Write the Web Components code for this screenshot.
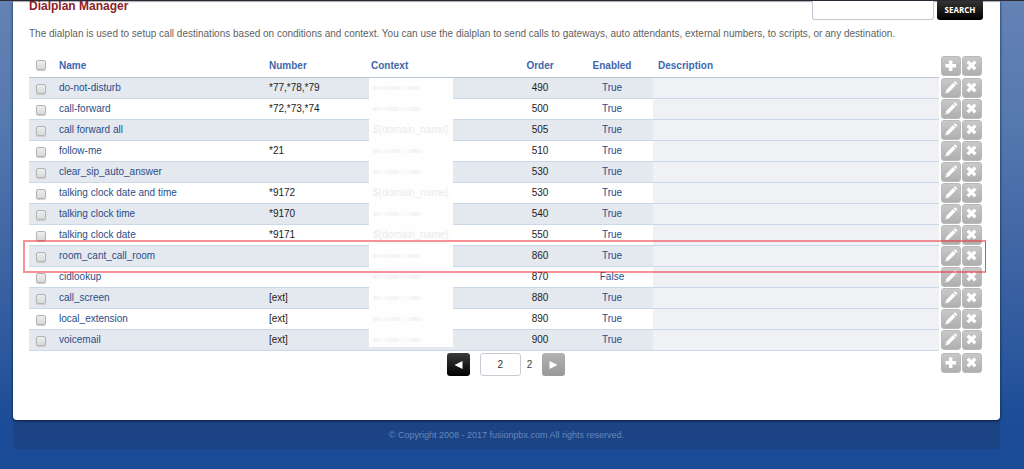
<!DOCTYPE html>
<html lang="en">
<head>
<meta charset="utf-8">
<title>Dialplan Manager</title>
<style>
  html { height: 100%; }
  body { margin: 0; min-height: 100%; font: 10px/12px "Liberation Sans", Arial, sans-serif; color: #5f5f5f;
    background: linear-gradient(#6482b4 0, #5679b0 25%, #4166a4 52%, #2f5a9f 72%, #1c4c97 90%, #1a4b96 100%); }
</style>
</head>
<body>
<app-shell>
  <page-heading>Dialplan Manager</page-heading>
  <page-note>The dialplan is used to setup call destinations based on conditions and context. You can use the dialplan to send calls to gateways, auto attendants, external numbers, to scripts, or any destination.</page-note>
  <dialplan-table></dialplan-table>
  <page-nav page="2" total="2"></page-nav>
  <span slot="footer">© Copyright 2008 - 2017 fusionpbx.com All rights reserved.</span>
</app-shell>

<script>
class ShadowElement extends HTMLElement {
  constructor() {
    super();
    this.attachShadow({ mode: 'open' });
  }
  connectedCallback() {
    this.shadowRoot.innerHTML = this.render();
  }
}

customElements.define('app-shell', class extends ShadowElement {
  render() {
    return `<style>
      :host { display: block; padding: 0 24px 20px 13px; border-top: 1px solid #2f2b33; }
      main { background: #fff; padding: 0 17px 44px 16px; border-radius: 0 0 4px 4px;
        box-shadow: 0 1px 3px #0b1c3c, inset 0 2px 1px -1px #aaa; position: relative; }
      footer { background: rgba(27, 60, 115, .5); color: #6588ba; height: 29px; line-height: 31px;
        text-align: center; font-size: 9px; border-radius: 0 0 4px 4px; }
    </style>
    <main><slot></slot></main>
    <footer><slot name="footer"></slot></footer>`;
  }
});

customElements.define('page-heading', class extends ShadowElement {
  render() {
    return `<style>
      :host { display: flex; gap: 3px; height: 19px; }
      h1 { margin: 0 auto 0 0; font-size: 12px; line-height: 10px; color: #8e2027; }
      input { box-sizing: border-box; width: 122px; border: 1px solid #c4c8d2; border-top: 0;
        border-radius: 0 0 3px 3px; background: #fff; padding: 0 4px; font: inherit; outline: 0; }
      button { width: 46px; border: 0; padding: 0 0 2px; border-radius: 0 0 3px 3px; color: #fff;
        background: linear-gradient(#333, #000); font: bold 8px/12px "Open Sans", sans-serif; }
    </style>
    <h1><slot></slot></h1>
    <input type="text" aria-label="Search">
    <button type="button">SEARCH</button>`;
  }
});

customElements.define('page-note', class extends ShadowElement {
  render() {
    return `<style>
      :host { display: block; }
      p { margin: 8px 0 16px; line-height: 12px; }
    </style>
    <p><slot></slot></p>`;
  }
});

const ICONS = {
  add: '<path d="M8 4.5h3.4V8H15v3.4h-3.600V15H8v-3.600H4.500V8H8z"/>',
  remove: '<path d="M6.900 4.400 9.500 7l2.600-2.600 2.400 2.400L11.900 9.400l2.600 2.600-2.400 2.400-2.600-2.600-2.600 2.600L4.500 12l2.600-2.600L4.500 6.800z"/>',
  edit: '<path d="M4.200 15.400 5.200 12l6.900-6.900 2.500 2.500-6.900 6.900zM12.700 4.500l.7-.7q.6-.5 1.200 0l1.300 1.300q.5.600 0 1.200l-.7.700z"/><path d="M5.200 13.300l1 1" stroke="#bbb" stroke-width=".8"/>'
};

customElements.define('icon-button', class extends ShadowElement {
  render() {
    return `<style>
      :host { display: block; }
      button { display: block; box-sizing: border-box; width: 20px; height: 20px; padding: 0; border: 1px solid #b9b9b9;
        border-radius: 3px; background: linear-gradient(#c8c8c8, #afafaf); }
      svg { display: block; margin: -1px; fill: #fff; }
    </style>
    <button type="button" aria-label="${this.getAttribute('icon')}"><svg width="20" height="20" viewBox="0 0 20 20">${ICONS[this.getAttribute('icon')]}</svg></button>`;
  }
});

const ROWS = [
  ['do-not-disturb', '*77,*78,*79', '', 490, 'True'],
  ['call-forward', '*72,*73,*74', '', 500, 'True'],
  ['call forward all', '', '${domain_name}', 505, 'True'],
  ['follow-me', '*21', '', 510, 'True'],
  ['clear_sip_auto_answer', '', '', 530, 'True'],
  ['talking clock date and time', '*9172', '${domain_name}', 530, 'True'],
  ['talking clock time', '*9170', '', 540, 'True'],
  ['talking clock date', '*9171', '${domain_name}', 550, 'True'],
  ['room_cant_call_room', '', '', 860, 'True', true],
  ['cidlookup', '', '', 870, 'False'],
  ['call_screen', '[ext]', '', 880, 'True'],
  ['local_extension', '[ext]', '', 890, 'True'],
  ['voicemail', '[ext]', '', 900, 'True']
];

customElements.define('dialplan-table', class extends ShadowElement {
  render() {
    const row = ([name, number, context, order, enabled, marked]) => `
      <tr${marked ? ' class="marked"' : ''}>
        <td class="check"><input type="checkbox" aria-label="${name}">${marked ? '<span class="frame"></span>' : ''}</td>
        <td><a href="#${name}">${name}</a></td>
        <td>${number}</td>
        <td class="context"><span class="hidden">${context || '<i></i>'}</span></td>
        <td class="mid">${order}</td>
        <td class="mid"><a href="#enabled">${enabled}</a></td>
        <td class="note"></td>
        <td class="tools"><div><icon-button icon="edit"></icon-button><icon-button icon="remove"></icon-button></div></td>
      </tr>`;
    return `<style>
      :host { display: block; }
      table { width: 100%; table-layout: fixed; border-spacing: 0; color: #222; }
      tr { height: 21px; }
      thead tr { height: 22px; }
      th, td { box-sizing: border-box; padding: 0 5px; text-align: left; line-height: 12px; border-bottom: 1px solid #cbd8e9; }
      th { color: #3f66ad; border-color: #b9c5d4; padding-bottom: 2px; }
      tbody tr:nth-child(odd) td { background: #e4e8ef; }
      tbody td.note.note { background: #eff1f5; }
      a { color: #294d87; text-decoration: none; }
      .mid { text-align: center; }
      th.tools, tbody td.tools.tools { border: 0; padding: 0 0 0 2px; background: none; vertical-align: top; }
      .tools div { display: flex; gap: 1px; }
      .check { padding: 0 0 0 7px; }
      td.check { vertical-align: bottom; }
      input { appearance: none; display: block; box-sizing: border-box; width: 10px; height: 10px; margin: 0 0 4px;
        border: 1px solid #b4b4b4; border-radius: 2px; background: linear-gradient(#ededed, #dadada); box-shadow: 0 1px 1px #ccc; }
      .context { position: relative; }
      .hidden { position: absolute; left: 3px; top: 0; bottom: -1px; width: 80px; padding-left: 4px;
        background: #fefefe; color: #ebebeb; line-height: 19px; }
      tr:last-child .hidden { bottom: 3px; }
      .hidden i { display: block; width: 50px; height: 4px; margin-top: 8px;
        background: linear-gradient(90deg, #f2f2f2, #fafafa 20%, #f3f3f3 45%, #fcfcfc 60%, #f2f2f2 85%, #fefefe); }
      .marked { position: relative; }
      .frame { position: absolute; z-index: 1; left: -6px; right: -3px; top: -6px; bottom: -6px; pointer-events: none;
        border: 2px solid rgba(240, 40, 50, .5); border-right: 1px solid #f0464e; }
    </style>
    <table>
      <colgroup>
        <col style="width:25px"><col style="width:210px"><col style="width:102px"><col style="width:143px">
        <col style="width:62px"><col style="width:82px"><col><col style="width:44px">
      </colgroup>
      <thead><tr>
        <th class="check"><input type="checkbox" aria-label="Select all"></th>
        <th>Name</th><th>Number</th><th>Context</th><th class="mid">Order</th><th class="mid">Enabled</th><th>Description</th>
        <th class="tools"><div><icon-button icon="add"></icon-button><icon-button icon="remove"></icon-button></div></th>
      </tr></thead>
      <tbody>${ROWS.map(row).join('')}</tbody>
    </table>`;
  }
});

customElements.define('page-nav', class extends ShadowElement {
  render() {
    return `<style>
      :host { display: grid; grid-template-columns: 1fr auto 1fr; margin-top: 2px; }
      nav { display: flex; align-items: center; grid-column: 2; color: #444; }
      button { width: 23px; height: 23px; padding: 0; border: 0; border-radius: 3px; background: linear-gradient(#3c3c3c, #000); }
      button:disabled { background: linear-gradient(#b2b2b2, #999); }
      svg { display: block; margin: auto; fill: #fff; }
      input { box-sizing: border-box; width: 41px; height: 23px; margin: 0 6px 0 10px; padding: 0; border: 1px solid #c8ccd5;
        border-radius: 3px; text-align: center; font: inherit; color: #333; outline: 0; }
      nav span { margin-right: 10px; }
      .tools { display: flex; gap: 1px; justify-self: end; width: 42px; }
    </style>
    <nav>
      <button type="button" aria-label="Previous page"><svg width="9" height="8" viewBox="0 0 9 8"><path d="M8.500 0v8L.5 4z"/></svg></button>
      <input type="text" aria-label="Page" value="${this.getAttribute('page')}">
      <span>${this.getAttribute('total')}</span>
      <button type="button" aria-label="Next page" disabled><svg width="9" height="8" viewBox="0 0 9 8"><path d="M.5 0v8l8-4z"/></svg></button>
    </nav>
    <div class="tools"><icon-button icon="add"></icon-button><icon-button icon="remove"></icon-button></div>`;
  }
});
</script>
</body>
</html>
